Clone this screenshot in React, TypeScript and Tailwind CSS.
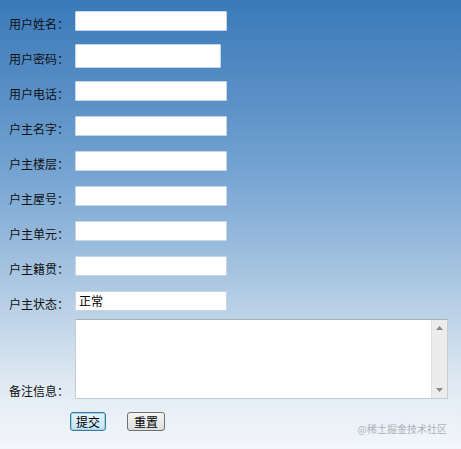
import React from "react";

const font = { fontFamily: '"Noto Sans CJK SC", "Liberation Sans", sans-serif' };

function Row({ label, w = "w-[152px]", h = "h-[20px]", value = "" }: { label: string; w?: string; h?: string; value?: string }) {
  return (
    <div className="flex h-[35px] items-center">
      <span className="w-[66px] mt-[6px] text-[12px] leading-[12px] text-[#111]">{label}</span>
      <input
        readOnly
        value={value}
        className={`${w} ${h} bg-white border border-[#c8d6e4] rounded-[1px] px-[3px] text-[12px] text-black outline-none`}
        style={font}
      />
    </div>
  );
}

export default function App() {
  return (
    <div
      className="relative w-[461px] h-[449px] overflow-hidden bg-[linear-gradient(to_bottom,#3a7aba_0%,#5a90c6_22%,#78a6d3_40%,#b3cce4_66%,#dfe9f3_85%,#f3f6fa_100%)]"
      style={font}
    >
      <div className="pt-[3px] pl-[9px]">
        <Row label="用户姓名：" />
        <Row label="用户密码：" w="w-[146px]" h="h-[24px]" />
        <Row label="用户电话：" />
        <Row label="户主名字：" />
        <Row label="户主楼层：" />
        <Row label="户主屋号：" />
        <Row label="户主单元：" />
        <Row label="户主籍贯：" />
        <Row label="户主状态：" value="正常" />
        <div className="flex items-end mt-[1px]">
          <span className="w-[66px] mb-[2px] text-[12px] leading-[12px] text-[#111]">备注信息：</span>
          <div className="flex w-[373px] h-[80px] bg-white border border-[#c4ccd4] border-t-[#a8b0b8]">
            <textarea readOnly className="flex-1 resize-none outline-none bg-white" />
            <div className="w-[16px] bg-[#ececec] border-l border-[#e0e0e0] flex flex-col items-center justify-between py-[6px]">
              <svg width="7" height="4" viewBox="0 0 7 4"><path d="M3.5 0 L7 4 L0 4 Z" fill="#8a8a8a" /></svg>
              <svg width="7" height="4" viewBox="0 0 7 4"><path d="M0 0 L7 0 L3.5 4 Z" fill="#8a8a8a" /></svg>
            </div>
          </div>
        </div>
        <div className="flex mt-[13px] ml-[61px] gap-[21px]">
          <button
            className="w-[36px] h-[19px] rounded-[3px] border border-[#3d7a99] bg-[linear-gradient(to_bottom,#e6f4fb,#c3e2f3)] text-[12px] leading-[12px] text-black flex items-center justify-center shadow-[inset_0_0_0_1px_#9fd3ee]"
            style={font}
          >
            提交
          </button>
          <button
            className="w-[38px] h-[19px] rounded-[3px] border border-[#707070] bg-[linear-gradient(to_bottom,#f6f6f6,#dddddd)] text-[12px] leading-[12px] text-black flex items-center justify-center"
            style={font}
          >
            重置
          </button>
        </div>
      </div>
      <div className="absolute right-[14px] top-[423px] text-[10px] leading-[12px] text-[#aab2ba]">@稀土掘金技术社区</div>
    </div>
  );
}
